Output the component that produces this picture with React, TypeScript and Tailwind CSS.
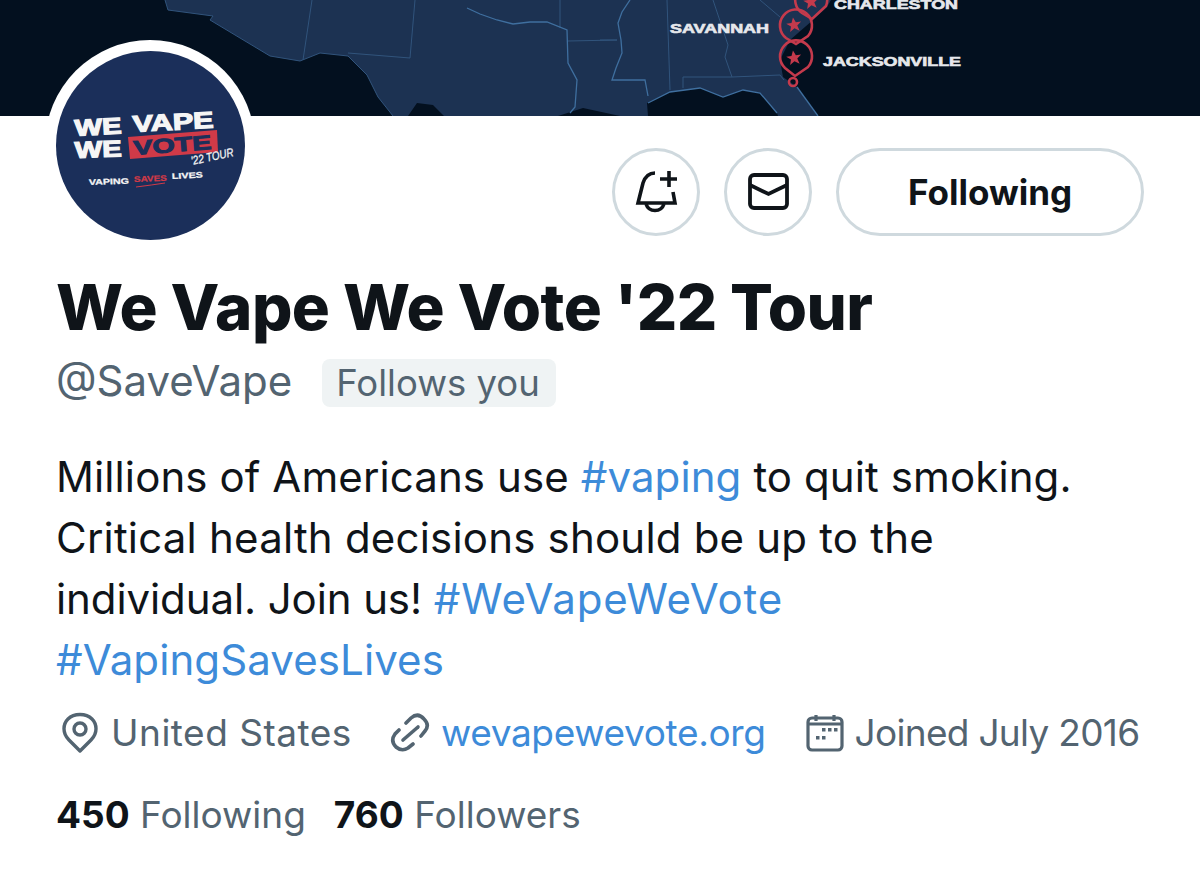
import React from 'react';

function Star({ x, y }: { x: number; y: number }) {
    return (
        <polygon
            transform={`translate(${x} ${y}) rotate(-8)`}
            points="0,-7.5 2.2,-2.4 7.5,-2.4 3.2,1 4.8,6.5 0,3.4 -4.8,6.5 -3.2,1 -7.5,-2.4 -2.2,-2.4"
            fill="#c43a4c"
        />
    );
}

function BannerMap() {
    return (
        <svg viewBox="0 0 1200 116" className="block w-full h-[116px]">
            <rect width="1200" height="116" fill="#03101f" />
            {/* land */}
            <path
                fill="#1c3252"
                d="M165 0 L168 10 L213 16 L210 20 L270 56 L300 61 L320 53 L348 56 L367 75 L378 97 L393 116 L408 116 L417 103 L433 105 L444 116 L558 116 L583 108 L620 116 L648 116 L647 103 L670 92 L700 88 L723 97 L743 90 L760 93 L777 113 L778 116 L818 116 L797 87 L783 77 L780 60 L790 40 L813 20 L827 7 L831 0 Z"
            />
            {/* state lines */}
            <g fill="none" stroke="#31547c" strokeWidth="1">
                <path d="M312 0 L303 60" />
                <path d="M415 0 L410 58 L348 53" />
                <path d="M560 0 L560 28" />
                <path d="M568 41 L617 40" />
                <path d="M667 0 L670 90" />
                <path d="M713 0 L728 45 L725 57 L732 77" />
                <path d="M683 88 L683 77 L732 77 L780 75 L784 80" />
                <path d="M760 0 L780 17" />
                <path d="M600 40 L617 40" />
                <path d="M300 61 L320 53 L348 56 L367 75 L378 97 L393 116" />
                <path d="M165 0 L168 10 L213 16 L210 20 L270 56 L300 61" />
            </g>
            <g fill="none" stroke="#3f6f9f" strokeWidth="1.3">
                <path d="M467 8 L480 14 L497 20 L513 24 L530 22 L547 22 L567 30 L568 63 L577 80 L575 107 L570 113" />
                <path d="M630 0 L622 12 L618 23 L621 40 L622 53 L616 68 L612 80 L645 80 L648 96" />
                <path d="M648 103 L670 92 L700 88 L723 97 L743 90 L760 93 L777 113" />
                <path d="M797 87 L818 116" />
            </g>
            {/* tour stops */}
            <g fill="none" stroke="#c43a4c" strokeWidth="2.6">
                <path d="M802 13 A16 16 0 1 1 826 6 L812 19 Z" />
                <path d="M786 38 A16 16 0 1 1 808 36 L796 44 Z" />
                <path d="M785 68 A16 16 0 1 1 808 67 L795 76 Z" />
                <circle cx="793" cy="82" r="4" />
            </g>
            <Star x={811} y={2} />
            <Star x={794} y={25} />
            <Star x={794} y={58} />
            <g fill="#e6e8ec" fontFamily="Liberation Sans, sans-serif" fontWeight="700" fontSize="12.5" stroke="#e6e8ec" strokeWidth="0.6">
                <text x="670" y="33" textLength="99" lengthAdjust="spacingAndGlyphs">SAVANNAH</text>
                <text x="834" y="9" textLength="124" lengthAdjust="spacingAndGlyphs">CHARLESTON</text>
                <text x="823" y="66" textLength="138" lengthAdjust="spacingAndGlyphs">JACKSONVILLE</text>
            </g>
        </svg>
    );
}

function AvatarLogo() {
    return (
        <svg viewBox="0 0 189 189" className="w-[189px] h-[189px] rounded-full block">
            <rect width="189" height="189" fill="#1b2f5a" />
            <g fontFamily="Liberation Sans, sans-serif" fontWeight="700" fill="#f5f5f5">
                <g stroke="#f5f5f5" strokeWidth="1.2" fontSize="23">
                    <text transform="rotate(-3 19 85)" x="19" y="85" textLength="47" lengthAdjust="spacingAndGlyphs">WE</text>
                    <text transform="rotate(-3 77 81)" x="77" y="81" textLength="81" lengthAdjust="spacingAndGlyphs">VAPE</text>
                    <text transform="rotate(-2 19 107)" x="19" y="107" textLength="47" lengthAdjust="spacingAndGlyphs">WE</text>
                </g>
                <polygon points="72,86 161,79 162,101 74,108" fill="#d03a48" />
                <text
                    transform="rotate(-4.5 78 104)"
                    x="78"
                    y="104"
                    fontSize="20"
                    fill="#1b2f5a"
                    stroke="#1b2f5a"
                    strokeWidth="1"
                    textLength="78"
                    lengthAdjust="spacingAndGlyphs"
                >
                    VOTE
                </text>
                <text
                    transform="rotate(-12 136 114)"
                    x="136"
                    y="114"
                    fontSize="12"
                    fontStyle="italic"
                    fontWeight="400"
                    stroke="#f5f5f5"
                    strokeWidth="0.3"
                    textLength="43"
                    lengthAdjust="spacingAndGlyphs"
                >
                    '22 TOUR
                </text>
                <g fontSize="8" stroke="#f5f5f5" strokeWidth="0.25">
                    <text transform="rotate(-2 33 134)" x="33" y="134" textLength="40" lengthAdjust="spacingAndGlyphs">VAPING</text>
                    <text transform="rotate(-2 78 131)" x="78" y="131" fill="#d03a48" stroke="#d03a48" textLength="33" lengthAdjust="spacingAndGlyphs">SAVES</text>
                    <text transform="rotate(-3 116 128)" x="116" y="128" textLength="31" lengthAdjust="spacingAndGlyphs">LIVES</text>
                </g>
                <path d="M80 136 Q96 134 109 132" stroke="#d03a48" strokeWidth="1" fill="none" />
            </g>
        </svg>
    );
}

function BellPlusIcon() {
    return (
        <svg viewBox="0 0 48 48" className="w-12 h-12" fill="none" stroke="#0f1419" strokeWidth="3.6">
            <path d="M23 5 C16 5 13 9 11 15 L8 27 L6 35 H43 L41 24" />
            <path d="M14 36 a9.5 9.5 0 0 0 18 0" />
            <path d="M28 11 H45 M37 3 V19" />
        </svg>
    );
}

function MailIcon() {
    return (
        <svg viewBox="0 0 48 48" className="w-12 h-12" fill="none" stroke="#0f1419" strokeWidth="3.8">
            <rect x="6" y="7" width="37" height="33" rx="4" />
            <path d="M6 17 L24.5 26 L43 17" />
        </svg>
    );
}

function PinIcon() {
    return (
        <svg viewBox="0 0 36 42" className="w-9 h-[42px] shrink-0" fill="none" stroke="#536471" strokeWidth="3.4">
            <path d="M18 39 L7 28 C0 21 1 12 6 7 C12 1 24 1 30 7 C35 12 36 21 29 28 Z" strokeLinejoin="round" />
            <circle cx="18" cy="17" r="6" />
        </svg>
    );
}

function LinkIcon() {
    return (
        <svg viewBox="0 0 40 42" className="w-10 h-[42px] shrink-0" fill="none" stroke="#536471" strokeWidth="3.6" strokeLinecap="round">
            <path d="M16 11 L21 6 Q28 0 34 7 Q40 13 35 19 L31 24" />
            <path d="M9 18 L5 22 Q0 29 6 35 Q12 40 18 36 L23 32" />
            <path d="M13 28 L28 15" />
        </svg>
    );
}

function CalendarIcon() {
    return (
        <svg viewBox="0 0 38 38" className="w-[38px] h-[38px] shrink-0" fill="none" stroke="#536471" strokeWidth="3.2">
            <rect x="2" y="4" width="34" height="32" rx="4" />
            <path d="M2 10 H36" />
            <path d="M10 1 V7 M28 1 V7" />
            <g fill="#536471" stroke="none">
                <rect x="16" y="14" width="3.5" height="3.5" />
                <rect x="22" y="14" width="3.5" height="3.5" />
                <rect x="28" y="14" width="3.5" height="3.5" />
                <rect x="10" y="22" width="3.5" height="3.5" />
                <rect x="16" y="22" width="3.5" height="3.5" />
            </g>
        </svg>
    );
}

function App() {
    return (
        <div className="relative w-[1200px] h-[890px] bg-white overflow-hidden [font-family:Inter,sans-serif] text-[#0f1419]">
            <BannerMap />

            {/* Avatar */}
            <div className="absolute left-[45px] top-[40px] w-[210px] h-[210px] rounded-full bg-white flex items-center justify-center">
                <AvatarLogo />
            </div>

            {/* Action buttons */}
            <div className="flex justify-end gap-6 pr-[56px] pt-8">
                <button className="w-[88px] h-[88px] rounded-full border-[3px] border-[#cfd9de] flex items-center justify-center">
                    <BellPlusIcon />
                </button>
                <button className="w-[88px] h-[88px] rounded-full border-[3px] border-[#cfd9de] flex items-center justify-center">
                    <MailIcon />
                </button>
                <button className="w-[308px] h-[88px] rounded-full border-[3px] border-[#cfd9de] text-[35px] font-bold">
                    Following
                </button>
            </div>

            {/* Profile details */}
            <div className="pl-[56px] pt-[36px]">
                <h1 className="text-[63.5px] leading-[70px] font-extrabold tracking-[-0.5px]">We Vape We Vote '22 Tour</h1>

                <div className="flex items-center mt-[17px] h-[48px]">
                    <span className="text-[42px] mb-[6px] text-[#536471]">@SaveVape</span>
                    <span className="ml-[30px] h-[48px] pl-[14px] pr-[16px] rounded-lg bg-[#eff3f4] text-[#536471] text-[36.5px] leading-[48px]">
                        Follows you
                    </span>
                </div>

                <p className="mt-[39px] text-[42px] tracking-[0.1px] leading-[61px] w-[1120px]">
                    Millions of Americans use <span className="text-[#3d8bd9]">#vaping</span> to quit smoking.
                    <br />
                    <span className="tracking-[0.2px]">Critical health decisions should be up to the</span>
                    <br />
                    <span className="tracking-[-0.1px]">individual. Join us!</span>{' '}
                    <span className="text-[#3d8bd9] tracking-[0.85px]">#WeVapeWeVote</span>
                    <br />
                    <span className="text-[#3d8bd9]">#VapingSavesLives</span>
                </p>

                <div className="flex items-center mt-[22px] text-[37px] text-[#536471] h-[42px]">
                    <span className="ml-[6px]"><PinIcon /></span>
                    <span className="ml-[13px] tracking-[0.5px]">United States</span>
                    <span className="ml-[38px]"><LinkIcon /></span>
                    <span className="ml-[11px] text-[#3d8bd9] tracking-[-0.35px]">wevapewevote.org</span>
                    <span className="ml-[40px]"><CalendarIcon /></span>
                    <span className="ml-[11px] tracking-[-0.7px]">Joined July 2016</span>
                </div>

                <div className="flex items-center mt-[39px] text-[37px] leading-[44px] text-[#536471]">
                    <span><b className="text-[#0f1419] font-bold">450</b> Following</span>
                    <span className="ml-[28px]"><b className="text-[#0f1419] font-bold">760</b> Followers</span>
                </div>
            </div>
        </div>
    );
}

export default App;
